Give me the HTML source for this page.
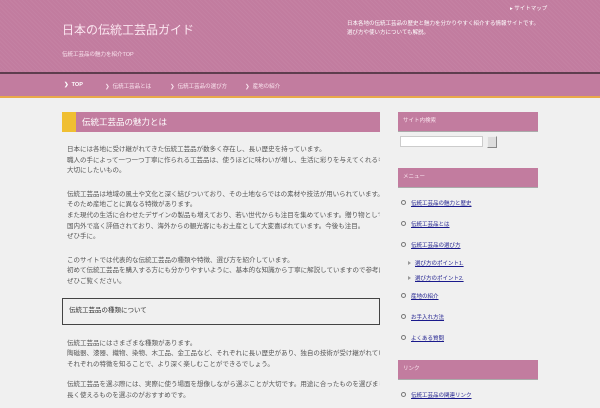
<!DOCTYPE html>
<html><head><meta charset="utf-8"><style>
*{margin:0;padding:0;box-sizing:border-box}
body{width:600px;height:400px;overflow:hidden;background:#f0f0f0;font-family:"Liberation Sans","Noto Sans CJK JP",sans-serif;position:relative}
.hdr{position:absolute;left:0;top:0;width:600px;height:72px;background:#c27c9f;background-image:repeating-linear-gradient(45deg,rgba(255,255,255,.04) 0 1px,transparent 1px 3px)}
.line1{position:absolute;top:72px;left:0;width:600px;height:2px;background:#5e3d4e}
.nav{position:absolute;top:74px;left:0;width:600px;height:22px;background:#c27c9f}
.line2{position:absolute;top:96px;left:0;width:600px;height:2px;background:#e9a94a}
.a{position:absolute;white-space:nowrap}
.title{left:62px;top:22px;font-size:12px;color:#fbe6f0;line-height:16px}
.sub{left:62px;top:50px;font-size:5.5px;color:#fbe6f0}
.tr{left:510px;top:4px;font-size:5.5px;color:#fff}
.desc{left:347px;top:20px;font-size:5.5px;color:#fff;line-height:9px}
.nv{top:82px;font-size:5.5px;color:#fbe6f0}
.main{position:absolute;left:62px;top:112px;width:318px}
.h2{height:20px;background:#c27c9f;position:relative;color:#fff;font-size:8.5px;line-height:20px;padding-left:20px}
.h2:before{content:"";position:absolute;left:0;top:0;width:14px;height:20px;background:#f0bf32}
p{font-size:6.5px;line-height:10.6px;color:#555;padding:0 5px;margin-top:13px;white-space:nowrap;overflow:hidden}
.box{border:1.5px solid #444;height:27px;margin-top:10px;font-size:6.5px;line-height:24px;padding-left:6px;color:#333}
.side{position:absolute;left:398px;width:140px}
.sh{height:19px;background:#c27c9f;box-shadow:0 1px 0 #aaa;color:#fbe6f0;font-size:5.5px;line-height:19px;padding-left:5px}
.li{position:absolute;left:3px;font-size:5.5px;color:#1a1a8c;text-decoration:underline;white-space:nowrap;padding-left:10px}
.li:before{content:"";position:absolute;left:0;top:1px;width:3px;height:3px;border:1.5px solid #777;border-radius:50%}
.sl{position:absolute;left:10px;font-size:5.5px;color:#1a1a8c;text-decoration:underline;white-space:nowrap;padding-left:7px}
.sl:before{content:"";position:absolute;left:0;top:2px;border-left:3px solid #999;border-top:2px solid transparent;border-bottom:2px solid transparent}
</style></head><body>
<div class="hdr"></div><div class="line1"></div><div class="nav"></div><div class="line2"></div>
<div class="a title">日本の伝統工芸品ガイド</div>
<div class="a sub">伝統工芸品の魅力を紹介TOP</div>
<div class="a tr">▸ サイトマップ</div>
<div class="a desc">日本各地の伝統工芸品の歴史と魅力を分かりやすく紹介する情報サイトです。<br>選び方や使い方についても解説。</div>
<div class="a nv" style="left:64px;font-weight:bold;color:#fff">❯&nbsp; TOP</div>
<div class="a nv" style="left:105px">❯&nbsp; 伝統工芸品とは</div>
<div class="a nv" style="left:170px">❯&nbsp; 伝統工芸品の選び方</div>
<div class="a nv" style="left:245px">❯&nbsp; 産地の紹介</div>
<div class="main">
<div class="h2">伝統工芸品の魅力とは</div>
<p>日本には各地に受け継がれてきた伝統工芸品が数多く存在し、長い歴史を持っています。<br>職人の手によって一つ一つ丁寧に作られる工芸品は、使うほどに味わいが増し、生活に彩りを与えてくれるものです。<br>大切にしたいもの。</p>
<p>伝統工芸品は地域の風土や文化と深く結びついており、その土地ならではの素材や技法が用いられています。<br>そのため産地ごとに異なる特徴があります。<br>また現代の生活に合わせたデザインの製品も増えており、若い世代からも注目を集めています。贈り物としても人気。<br>国内外で高く評価されており、海外からの観光客にもお土産として大変喜ばれています。今後も注目。<br>ぜひ手に。</p>
<p>このサイトでは代表的な伝統工芸品の種類や特徴、選び方を紹介しています。<br>初めて伝統工芸品を購入する方にも分かりやすいように、基本的な知識から丁寧に解説していますので参考に。<br>ぜひご覧ください。</p>
<div class="box">伝統工芸品の種類について</div>
<p style="margin-top:14px">伝統工芸品にはさまざまな種類があります。<br>陶磁器、漆器、織物、染物、木工品、金工品など、それぞれに長い歴史があり、独自の技術が受け継がれています。<br>それぞれの特徴を知ることで、より深く楽しむことができるでしょう。</p>
<p style="margin-top:10px">伝統工芸品を選ぶ際には、実際に使う場面を想像しながら選ぶことが大切です。用途に合ったものを選びましょう。<br>長く使えるものを選ぶのがおすすめです。</p>
</div>
<div class="side" style="top:112px"><div class="sh">サイト内検索</div></div>
<div class="a" style="left:400px;top:136px;width:83px;height:11px;background:#fff;border:1px solid #ccc"></div>
<div class="a" style="left:487px;top:136px;width:10px;height:12px;background:#ddd;border:1px solid #888;border-top-color:#eee;border-left-color:#eee"></div>
<div class="side" style="top:168px;height:240px">
<div class="sh">メニュー</div>
<div class="li" style="top:31px">伝統工芸品の魅力と歴史</div>
<div class="li" style="top:52px">伝統工芸品とは</div>
<div class="li" style="top:73px">伝統工芸品の選び方</div>
<div class="sl" style="top:91px">選び方のポイント1.</div>
<div class="sl" style="top:106px">選び方のポイント2.</div>
<div class="li" style="top:124px">産地の紹介</div>
<div class="li" style="top:145px">お手入れ方法</div>
<div class="li" style="top:166px">よくある質問</div>
</div>
<div class="side" style="top:360px;height:40px">
<div class="sh">リンク</div>
<div class="li" style="top:31px">伝統工芸品の関連リンク</div>
</div>
</body></html>
